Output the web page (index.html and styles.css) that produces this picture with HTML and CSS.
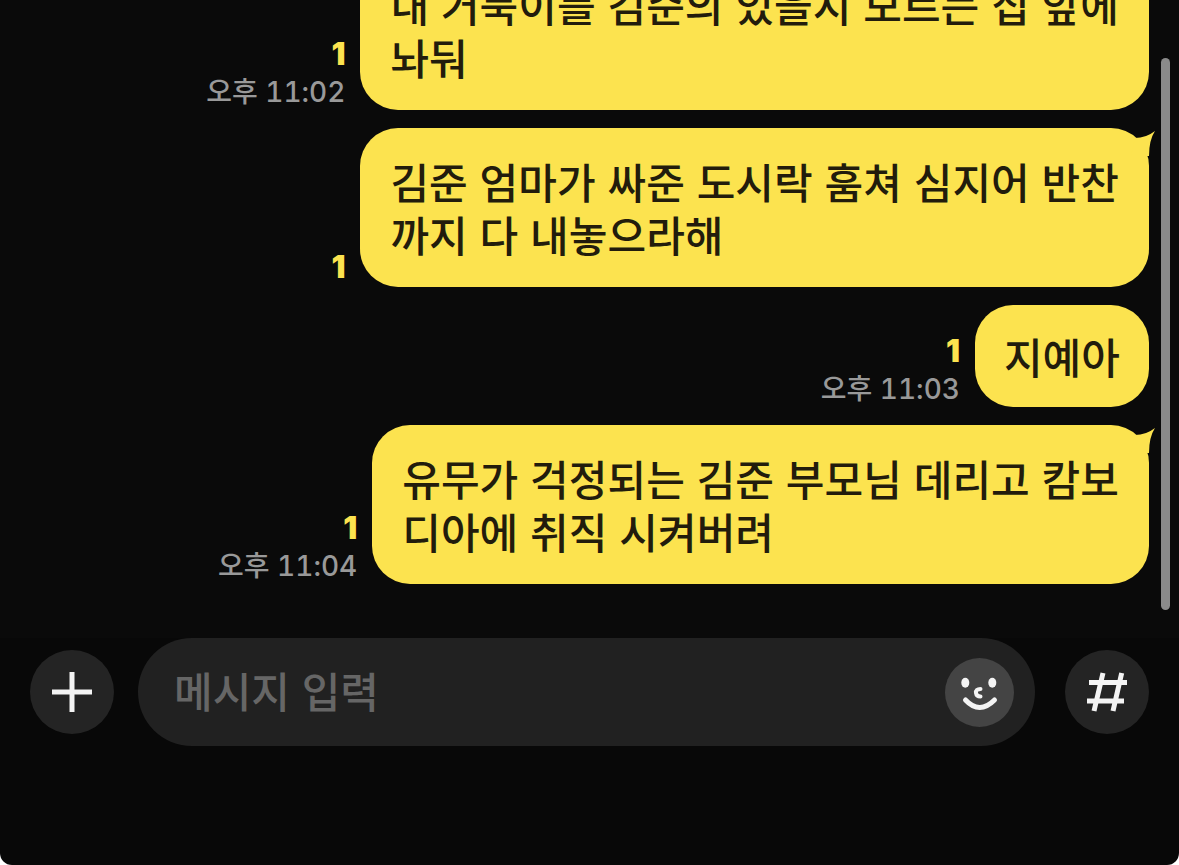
FILE: index.html
```html
<!DOCTYPE html>
<html lang="ko">
<head>
  <meta charset="UTF-8">
  <meta name="viewport" content="width=device-width, initial-scale=1.0">
  <title>채팅</title>
  <link rel="stylesheet" href="styles.css">
</head>
<body>
  <div class="screen">
    <div class="messages">
      <div class="row">
        <div class="meta">
          <span class="unread">1</span>
          <span class="time">오후 11:02</span>
        </div>
        <div class="bubble">내 거북이를 김준의 있을지 모르는 집 앞에<br>놔둬</div>
      </div>

      <div class="row">
        <div class="meta">
          <span class="unread">1</span>
        </div>
        <div class="bubble">
          김준 엄마가 싸준 도시락 훔쳐 심지어 반찬<br>까지 다 내놓으라해
          <svg class="tail" width="26" height="30" viewBox="0 0 26 30"><path d="M6 10Q17 10 26 3Q20 12 20 28L2 28Z"/></svg>
        </div>
      </div>

      <div class="row">
        <div class="meta">
          <span class="unread">1</span>
          <span class="time">오후 11:03</span>
        </div>
        <div class="bubble bubble-short">지예아</div>
      </div>

      <div class="row">
        <div class="meta">
          <span class="unread">1</span>
          <span class="time">오후 11:04</span>
        </div>
        <div class="bubble">
          유무가 걱정되는 김준 부모님 데리고 캄보<br>디아에 취직 시켜버려
          <svg class="tail" width="26" height="30" viewBox="0 0 26 30"><path d="M6 10Q17 10 26 3Q20 12 20 28L2 28Z"/></svg>
        </div>
      </div>
    </div>

    <div class="composer">
      <div class="round-btn">
        <svg width="84" height="84" viewBox="0 0 84 84"><path d="M22 42H62M42 22V62" stroke="#f4f4f4" stroke-width="5" fill="none"/></svg>
      </div>
      <div class="input">
        <span class="placeholder">메시지 입력</span>
        <div class="emoji-btn">
          <svg width="69" height="69" viewBox="0 0 69 69" fill="none">
            <ellipse cx="20.3" cy="24.7" rx="4" ry="5" fill="#f4f4f4"/>
            <ellipse cx="47.3" cy="24.7" rx="4" ry="5" fill="#f4f4f4"/>
            <path d="M35.5 31Q30.5 31 31 35Q31.5 38.5 35.5 38.5" stroke="#f4f4f4" stroke-width="4" stroke-linecap="round"/>
            <path d="M20.5 42Q34.5 57 49.5 42" stroke="#f4f4f4" stroke-width="5" stroke-linecap="round"/>
          </svg>
        </div>
      </div>
      <div class="round-btn">
        <svg width="84" height="84" viewBox="0 0 84 84" fill="none" stroke="#f4f4f4" stroke-width="5"><path d="M24 32.5H62M22 51H59M38 23L29 61M56.7 23L48 61"/></svg>
      </div>
    </div>
  </div>
  <div class="scrollbar"></div>
</body>
</html>
```

FILE: styles.css
```css
html {
  background: #fff;
}

body {
  margin: 0;
  height: 865px;
  overflow: hidden;
  position: relative;
  font-family: 'Noto Sans CJK KR', 'Noto Sans', sans-serif;
}

.screen {
  height: 865px;
  display: flex;
  flex-direction: column;
  overflow: hidden;
  background: #080808;
  border-radius: 0 0 12px 12px;
}

.messages {
  height: 638px;
  flex-shrink: 0;
  box-sizing: border-box;
  padding: 0 30px 54px 0;
  display: flex;
  flex-direction: column;
  justify-content: flex-end;
  gap: 18px;
  overflow: hidden;
  background: #0a0a0a;
}

.row {
  display: flex;
  justify-content: flex-end;
  align-items: flex-end;
  gap: 15px;
  flex-shrink: 0;
}

.meta {
  display: flex;
  flex-direction: column;
  align-items: flex-end;
  font-family: Inter, 'Noto Sans CJK KR', sans-serif;
}

.unread {
  color: #fce34f;
  font-size: 31px;
  font-weight: 900;
  line-height: 40px;
}

.time {
  color: #999;
  font-size: 28px;
  font-weight: 500;
  font-variant-numeric: tabular-nums;
  line-height: 36px;
}

.bubble {
  position: relative;
  box-sizing: border-box;
  min-height: 102px;
  padding: 25.5px 30px 27.5px;
  background: #fce34f;
  border-radius: 38px;
  color: #221c0c;
  font-size: 42px;
  font-weight: 500;
  letter-spacing: 0.05px;
  line-height: 53px;
  white-space: nowrap;
}

.bubble-short {
  padding: 23.5px 29px 25.5px;
}

.tail {
  position: absolute;
  top: 0;
  right: -6px;
  fill: #fce34f;
}

.composer {
  height: 108px;
  flex-shrink: 0;
  padding: 0 30px;
  display: flex;
  align-items: center;
  gap: 24px;
}

.round-btn {
  width: 84px;
  height: 84px;
  flex-shrink: 0;
  border-radius: 50%;
  background: #242424;
}

.input {
  flex: 1;
  height: 108px;
  margin-right: 6px;
  padding: 0 21px 0 36px;
  display: flex;
  align-items: center;
  justify-content: space-between;
  background: #212121;
  border-radius: 54px;
}

.placeholder {
  padding-bottom: 5px;
  color: #666;
  font-size: 42px;
  font-weight: 500;
}

.emoji-btn {
  width: 69px;
  height: 69px;
  border-radius: 50%;
  background: #444;
}

.emoji-btn svg,
.round-btn svg {
  display: block;
}

.scrollbar {
  position: absolute;
  left: 1161px;
  top: 58px;
  width: 9px;
  height: 552px;
  border-radius: 5px;
  background: #8a8a8a;
}
```
